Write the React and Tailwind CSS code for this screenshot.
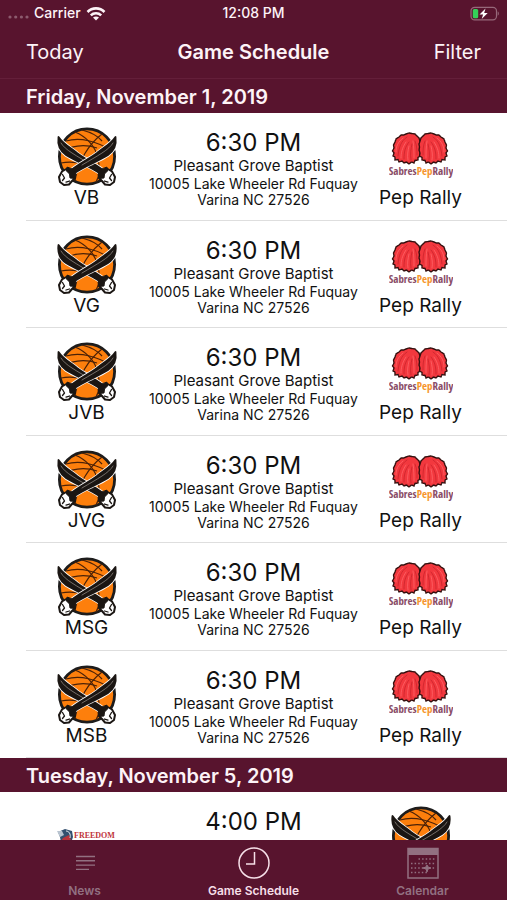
import React from 'react';

const games = [
  { id: 1, team: 'VB' },
  { id: 2, team: 'VG' },
  { id: 3, team: 'JVB' },
  { id: 4, team: 'JVG' },
  { id: 5, team: 'MSG' },
  { id: 6, team: 'MSB' },
];

// One sabre, tip at the top right, hilt at the bottom left
const BLADE = 'M60.5 10 C61.5 17 59 24 53 28 C43 34.5 31 38 18 47 L15.5 43.5 C24 36.5 34 32 42 26 C48 21 56 17 60.5 10Z';

const Sabre = () => (
  <g strokeLinejoin="round" strokeLinecap="round">
    <path d={BLADE} fill="#fff" stroke="#fff" strokeWidth="3.4" />
    <path d={BLADE} fill="#1b1613" stroke="#1b1613" strokeWidth="1.8" />
    <path d="M58 16 C54 23 43 28.5 27 38" fill="none" stroke="#8d857f" strokeWidth="0.8" />
    <path d="M13 41 L7 44.500 L4 50 L5 55 L9 58 L14 57.500 L17 54 L20 51Z" fill="#fff" stroke="#1b1613" strokeWidth="2" />
    <path d="M12 40.500 L11.500 44 L14.500 47 L15 51 L20 51.500 L21 47 L17 42Z" fill="#1b1613" stroke="#1b1613" strokeWidth="1" />
    <path d="M7.500 47.500 L9.500 51 L7.500 53.500 M11 55 L14.500 54" fill="none" stroke="#1b1613" strokeWidth="1.3" />
  </g>
);

const SabresLogo = () => (
  <svg viewBox="0 0 64 60" className="h-[60px] w-16" aria-hidden="true">
    <circle cx="32" cy="29.5" r="27.6" fill="#fd7f0c" stroke="#1d1c1c" strokeWidth="2.8" />
    <g fill="none" stroke="#4a2108" strokeWidth="1.2">
      <path d="M20 5 C30 9 40 18 43 31 C45 41 44 50 41 55" />
      <path d="M47 7 C34 17 23 34 20 54" />
      <path d="M11 14 C25 10 42 14 57 24" />
      <path d="M6 25 C18 18 30 17 42 21" />
      <path d="M6 36 C20 33 38 38 52 47" />
      <path d="M27 3 C35 5 42 8 47 14" />
    </g>
    <g transform="translate(64 0) scale(-1 1)">
      <Sabre />
    </g>
    <Sabre />
  </svg>
);

const Pom = () => (
  <g strokeLinecap="round">
    <path
      d="M14 2 L17 1 L20 1.5 L23 2 L25 4 L27 6 L28 9 L29 12 L28.5 15 L29 18 L28 21 L28.5 24 L26 25.5 L26 28 L23 28.5 L22 31 L19.5 30 L17 32 L14.5 30 L12 31 L10 29 L7 30 L6 27.5 L3 28 L3 25 L1 24 L2 21 L0.5 19 L2 16 L1.5 13 L3 10 L4 7 L7 5 L9 3 L12 3Z"
      fill="#f2383e"
      stroke="#35100f"
      strokeWidth="1.4"
      strokeDasharray="2.6 0.8"
    />
    <path d="M15 5 C9 9 7 15 6 24 M17 10 C13 15 12 20 12 27 M20 12 C19 17 18 21 19 28 M23 9 C25 14 25 18 25 23" fill="none" stroke="#c4212a" strokeWidth="0.7" />
    <path d="M11 6 C6 10 4 14 4 20 M14 10 C10 16 9 21 9 26 M17 14 C16 19 15 23 16 28 M21 9 C22 15 22 21 22 26" fill="none" stroke="#ff6468" strokeWidth="0.8" />
  </g>
);

const PepRallyLogo = () => (
  <svg viewBox="0 0 64 50" className="h-[50px] w-16" aria-hidden="true">
    <g transform="translate(3 0)">
      <Pom />
    </g>
    <g transform="translate(59 0) scale(-1 1)">
      <Pom />
    </g>
    <text x="32" y="43" textAnchor="middle" fontSize="11" fontWeight="300" fontFamily="'Open Sans Condensed', 'Open Sans Condensed Light', sans-serif" fill="#8a4d67">
      Sabres<tspan fill="#f6952c">Pep</tspan>Rally
    </text>
  </svg>
);

const FreedomLogo = () => (
  <svg viewBox="0 0 64 60" className="h-[60px] w-16" aria-hidden="true">
    <path d="M3 26 L10 23 L17 25 L18 31 L16 37 L6 37 L5 31Z" fill="#34506f" />
    <path d="M2 25 L7 25 L9 29 L5 31Z" fill="#b9c4d0" />
    <path d="M8 32 L14 29 L16 34 L12 37 L6 35Z" fill="#b8343c" />
    <path d="M11 25 C14 25 16 28 15 32" fill="none" stroke="#dfe5ea" strokeWidth="1" />
    <text x="19" y="32" fontSize="8" fontWeight="700" fontFamily="'Liberation Serif', serif" fill="#c0353a">FREEDOM</text>
  </svg>
);

const DateHeader = ({ children }) => (
  <h2 className="flex h-[34px] shrink-0 items-center bg-[#58142e] px-[26px] pt-0.5 text-xl font-semibold text-[#fdf3f7]">
    {children}
  </h2>
);

const GameRow = ({ left, leftName, time, venue, right, rightName }) => (
  <li className="relative grid h-[107px] shrink-0 grid-cols-3 pt-[13px] odd:h-[108px]">
    <div className="flex flex-col items-center pl-1">
      <div className="flex h-[62px] items-center">{left}</div>
      {leftName && <p className="text-[19px] leading-5">{leftName}</p>}
    </div>
    <div className="flex flex-col items-center whitespace-nowrap pt-1">
      <p className="text-2xl leading-[26px]">{time}</p>
      {venue && (
        <>
          <p className="text-[15px] leading-5">{venue.name}</p>
          <p className="text-center text-[14px] leading-4">
            {venue.street}
            <br />
            {venue.city}
          </p>
        </>
      )}
    </div>
    <div className="flex flex-col items-center pr-1">
      <div className="flex h-[62px] items-center">{right}</div>
      {rightName && <p className="text-[19px] leading-5">{rightName}</p>}
    </div>
    <div className="absolute right-0 bottom-0 left-[26px] h-px bg-[#dedede]" />
  </li>
);

const church = {
  name: 'Pleasant Grove Baptist',
  street: '10005 Lake Wheeler Rd Fuquay',
  city: 'Varina NC 27526',
};

const NewsIcon = () => (
  <svg viewBox="0 0 34 34" className="h-[34px] w-[34px]" fill="none" stroke="currentColor" strokeWidth="1.4" aria-hidden="true">
    <path d="M8 10.5h19M8 14.8h19M8 19.1h19M8 23.4h13" />
  </svg>
);

const ClockIcon = () => (
  <svg viewBox="0 0 34 34" className="h-[34px] w-[34px]" fill="none" stroke="currentColor" strokeWidth="1.5" aria-hidden="true">
    <circle cx="17" cy="17" r="15" />
    <path d="M17.5 6v12H9" />
  </svg>
);

const CalendarIcon = () => (
  <svg viewBox="0 0 34 34" className="h-[34px] w-[34px]" aria-hidden="true">
    <rect x="2" y="2.5" width="30" height="29.5" fill="none" stroke="currentColor" strokeWidth="1.5" />
    <rect x="2" y="2" width="30" height="7" fill="currentColor" />
    <g stroke="currentColor" strokeWidth="1.5" strokeDasharray="1.5 2.1">
      <path d="M12.5 13h17M5 17.5h24.5M5 22h24.5M5 26.5h17" />
    </g>
    <path d="M21 19l1 2 3 1-3 1-1 3-1-3-3-1 3-1z" fill="currentColor" stroke="currentColor" />
  </svg>
);

const tabs = [
  { label: 'News', Icon: NewsIcon },
  { label: 'Game Schedule', Icon: ClockIcon, active: true },
  { label: 'Calendar', Icon: CalendarIcon },
];

export default function App() {
  return (
    <div className="flex h-screen flex-col overflow-hidden bg-white font-['Inter','Liberation_Sans',sans-serif] text-[#111]">
      <header className="shrink-0 bg-[#58142e] text-[#fdf3f7]">
        {/* Status bar */}
        <div className="grid h-[26px] grid-cols-3 items-center px-2 text-sm font-medium">
          <div className="flex items-center gap-[5px]">
            <svg viewBox="0 0 21 14" className="h-3.5 w-[21px]" fill="#8c5b6e" aria-hidden="true">
              <circle cx="2" cy="11" r="1.6" />
              <circle cx="7.7" cy="11" r="1.6" />
              <circle cx="13.4" cy="11" r="1.6" />
              <circle cx="19" cy="11" r="1.6" />
            </svg>
            <span>Carrier</span>
            <svg viewBox="0 0 20 15" className="h-[15px] w-5" fill="none" stroke="currentColor" strokeWidth="2.6" aria-hidden="true">
              <path d="M1.5 6C6.2 1.2 13.8 1.2 18.5 6" />
              <path d="M4.8 9.4c2.9-2.8 7.5-2.8 10.4 0" />
              <path d="M10 14.5l-3-3c1.7-1.5 4.3-1.5 6 0z" fill="currentColor" stroke="none" />
            </svg>
          </div>
          <span className="text-center">12:08 PM</span>
          <svg viewBox="0 0 30 15" className="h-[15px] w-[30px] justify-self-end" aria-hidden="true">
            <rect x="2" y="1.3" width="25.5" height="12.6" rx="3.6" fill="none" stroke="#96687a" strokeWidth="1.2" />
            <path d="M28.7 5.5c1.5.6 1.5 3.6 0 4.2z" fill="#96687a" />
            <rect x="3.8" y="3" width="5.4" height="9.2" rx="1.5" fill="#34d058" />
            <path d="M16.5 2.5l-6 6h3.6l-1.4 4.5 6-6h-3.5z" fill="#fff" />
          </svg>
        </div>

        {/* Title bar */}
        <div className="grid h-[53px] grid-cols-[1fr_auto_1fr] items-center border-b border-[#641f3a] px-[26px] text-xl">
          <button type="button" className="justify-self-start">Today</button>
          <h1 className="font-semibold">Game Schedule</h1>
          <button type="button" className="justify-self-end">Filter</button>
        </div>
      </header>

      <main className="flex min-h-0 flex-1 flex-col overflow-hidden">
        <DateHeader>Friday, November 1, 2019</DateHeader>
        <ul className="shrink-0">
          {games.map((game) => (
            <GameRow
              key={game.id}
              left={<SabresLogo />}
              leftName={game.team}
              time="6:30 PM"
              venue={church}
              right={<PepRallyLogo />}
              rightName="Pep Rally"
            />
          ))}
        </ul>
        <DateHeader>Tuesday, November 5, 2019</DateHeader>
        <ul className="shrink-0">
          <GameRow left={<FreedomLogo />} time="4:00 PM" right={<SabresLogo />} />
        </ul>
      </main>

      <nav className="grid h-[60px] shrink-0 grid-cols-3 bg-[#58142e]">
        {tabs.map(({ label, Icon, active }) => (
          <a
            key={label}
            href="#"
            className={`flex flex-col items-center pt-1.5 text-xs font-semibold ${active ? 'text-[#f6dfe8]' : 'text-[#927081]'}`}
          >
            <Icon />
            <span className="mt-[3px] leading-4">{label}</span>
          </a>
        ))}
      </nav>
    </div>
  );
}
